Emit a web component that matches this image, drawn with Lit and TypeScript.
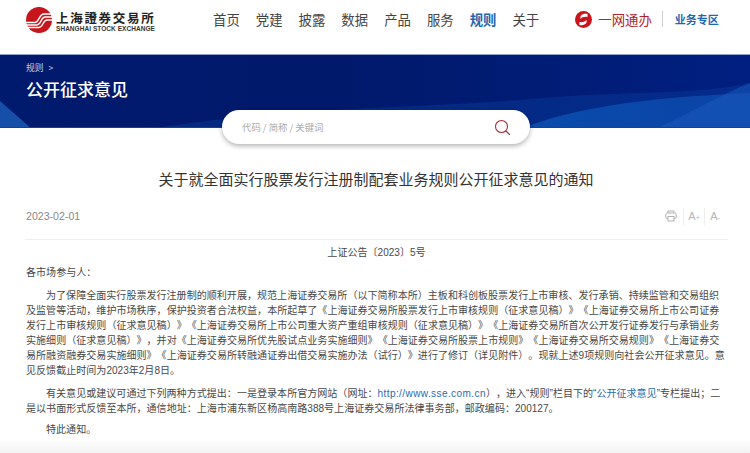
import { LitElement, html, css } from "lit";
import { customElement } from "lit/decorators.js";

const fw = (s: string) =>
  s
    .replace(/,/g, "\uFF0C")
    .replace(/\(/g, "\uFF08")
    .replace(/\)/g, "\uFF09")
    .replace(/:/g, "\uFF1A")
    .replace(/;/g, "\uFF1B");

const P1 = fw(
  "为了保障全面实行股票发行注册制的顺利开展,规范上海证券交易所(以下简称本所)主板和科创板股票发行上市审核、发行承销、持续监管和交易组织及监管等活动,维护市场秩序,保护投资者合法权益,本所起草了《上海证券交易所股票发行上市审核规则(征求意见稿)》《上海证券交易所上市公司证券发行上市审核规则(征求意见稿)》《上海证券交易所上市公司重大资产重组审核规则(征求意见稿)》《上海证券交易所首次公开发行证券发行与承销业务实施细则(征求意见稿)》,并对《上海证券交易所优先股试点业务实施细则》《上海证券交易所股票上市规则》《上海证券交易所交易规则》《上海证券交易所融资融券交易实施细则》《上海证券交易所转融通证券出借交易实施办法(试行)》进行了修订(详见附件)。现就上述9项规则向社会公开征求意见。意见反馈截止时间为2023年2月8日。"
);
const P2A = fw("有关意见或建议可通过下列两种方式提出:一是登录本所官方网站(网址:");
const P2B = fw("),进入\u201C规则\u201D栏目下的\u201C");
const P2C = fw(
  "\u201D专栏提出;二是以书面形式反馈至本所,通信地址:上海市浦东新区杨高南路388号上海证券交易所法律事务部,邮政编码:200127。"
);
const GREET = fw("各市场参与人:");

@customElement("app-root")
export class AppRoot extends LitElement {
  static styles = css`
    :host {
      display: block;
      width: 750px;
      height: 453px;
      overflow: hidden;
      position: relative;
      background: #fff;
      font-family: "Noto Sans CJK SC", "Liberation Sans", sans-serif;
      color: #444;
      text-spacing-trim: space-all;
    }
    .header {
      height: 54px;
      box-sizing: border-box;
      display: flex;
      align-items: flex-start;
      padding: 7px 0 0 26px;
    }
    .logo {
      display: flex;
      align-items: center;
      gap: 4px;
      width: 187px;
      flex: none;
    }
    .logo-text {
      display: flex;
      flex-direction: column;
      line-height: 1;
    }
    .logo-cn {
      font-family: "Noto Sans CJK JP", serif;
      font-size: 12.5px;
      font-weight: 700;
      letter-spacing: 1.7px;
      color: #222;
      height: 17px;
      line-height: 19px;
      white-space: nowrap;
    }
    .logo-en {
      font-family: "Liberation Sans", sans-serif;
      font-size: 6.5px;
      font-weight: 700;
      color: #333;
      white-space: nowrap;
      line-height: 7px;
      letter-spacing: 0.05px;
    }
    .nav {
      display: flex;
      gap: 16px;
      font-size: 13.4px;
      line-height: 24px;
      color: #444;
      white-space: nowrap;
    }
    .nav .active {
      color: #1f67b0;
      font-weight: 700;
    }
    .one {
      margin-left: 36px;
      display: flex;
      align-items: center;
      gap: 6px;
      height: 24px;
      color: #b3222c;
      font-size: 13.4px;
      white-space: nowrap;
    }
    .sep {
      width: 1px;
      height: 16px;
      background: #ccc;
      margin: 4px 12px 0 10px;
    }
    .zone {
      font-size: 11px;
      line-height: 24px;
      font-weight: 700;
      color: #1f67b0;
      white-space: nowrap;
    }
    .banner {
      height: 74px;
      box-sizing: border-box;
      position: relative;
      overflow: hidden;
      border-top: 1px solid #8fa3cc;
      border-bottom: 1px solid #1d3f8f;
      background: linear-gradient(90deg, #001a6d 0%, #00196b 45%, #001f80 100%);
      padding: 7px 0 0 26px;
      color: #fff;
    }
    .waves {
      position: absolute;
      inset: 0;
      width: 750px;
      height: 74px;
    }
    .crumb {
      position: relative;
      font-size: 8.8px;
      line-height: 12px;
      color: #c6cde2;
      display: flex;
      gap: 5px;
    }
    .banner h2 {
      position: relative;
      margin: 3px 0 0;
      font-size: 17px;
      line-height: 24px;
      font-weight: 500;
      color: #fff;
    }
    .search {
      position: relative;
      width: 308px;
      height: 34px;
      box-sizing: border-box;
      margin: -18px 0 0 222px;
      border-radius: 17px;
      background: #fff;
      box-shadow: 0 2px 5px rgba(0, 0, 0, 0.3);
      display: flex;
      align-items: center;
      justify-content: space-between;
      padding: 0 19px 0 20px;
      font-size: 9.4px;
      color: #aaa;
    }
    .search svg {
      display: block;
    }
    h1 {
      margin: 24px 0 0;
      padding-left: 2px;
      text-align: center;
      font-size: 15px;
      line-height: 22px;
      font-weight: 400;
      color: #333;
    }
    .meta {
      margin: 13px 22px 0 25px;
      height: 37px;
      box-sizing: border-box;
      border-bottom: 1px solid #eee;
      display: flex;
      justify-content: space-between;
      align-items: flex-start;
      font-family: "Liberation Sans", sans-serif;
      font-size: 10.6px;
      line-height: 26px;
      color: #888;
      padding-left: 1px;
    }
    .tools {
      display: flex;
      align-items: center;
      height: 26px;
      padding-right: 3px;
    }
    .tools .div {
      width: 1px;
      height: 17px;
      background: #eee;
    }
    .tools svg {
      display: block;
      margin-right: 6px;
    }
    .tool-a {
      width: 20px;
      text-align: center;
      color: #b4b4b4;
      font-size: 11px;
      line-height: 26px;
    }
    .tool-a small {
      font-size: 7px;
      line-height: 0;
    }
    .content {
      padding: 0 23px 0 26px;
      font-family: "Liberation Sans", "Noto Sans CJK SC", sans-serif;
      font-size: 10.05px;
      line-height: 15px;
      color: #484848;
    }
    .content p {
      margin: 0;
    }
    .content .doc-no {
      text-align: center;
      margin-top: 5px;
    }
    .content .greet {
      margin-top: 5px;
    }
    .content .para {
      text-indent: 20px;
      margin-top: 8px;
    }
    .content .first {
      margin-top: 8px;
    }
    .content .last {
      margin-top: 6px;
    }
    .blue {
      color: #2a6ab0;
    }
    .url {
      letter-spacing: 0.4px;
    }
    .foot {
      position: absolute;
      left: 0;
      right: 0;
      bottom: 0;
      height: 14px;
      background: linear-gradient(#ffffff, #f3f3f3);
    }
  `;

  render() {
    const nav = ["首页", "党建", "披露", "数据", "产品", "服务", "规则", "关于"];
    return html`
      <div class="header">
        <div class="logo">
          <svg width="26" height="26" viewBox="0 0 26 26">
            <circle cx="13" cy="13" r="13" fill="#c4161c" />
            <path d="M0 15.5 H9 C13 15.5 13 7 18 7 H25" fill="none" stroke="#fff" stroke-width="1.4" />
            <path d="M0 18 H11 C15 18 15 10 19 10 H26" fill="none" stroke="#fff" stroke-width="1.4" />
            <path d="M1 20.5 H13 C17 20.5 17 13 21 13 H26" fill="none" stroke="#fff" stroke-width="1.4" />
          </svg>
          <div class="logo-text">
            <span class="logo-cn">上海證券交易所</span>
            <span class="logo-en">SHANGHAI STOCK EXCHANGE</span>
          </div>
        </div>
        <nav class="nav">
          ${nav.map((n) => html`<span class=${n === "规则" ? "active" : ""}>${n}</span>`)}
        </nav>
        <div class="one">
          <svg width="17" height="17" viewBox="0 0 17 17">
            <circle cx="8.5" cy="8.5" r="8.5" fill="#c9161d" />
            <path d="M12.5 3 C8 2 4.5 4.5 5.5 8 C6.5 6.5 9 5.5 12.5 6 Z" fill="#fff" />
            <path d="M4.5 14 C9 15 12.5 12.5 11.5 9 C10.5 10.5 8 11.5 4.5 11 Z" fill="#fff" />
          </svg>
          <span>一网通办</span>
        </div>
        <div class="sep"></div>
        <div class="zone">业务专区</div>
      </div>

      <div class="banner">
        <svg class="waves" viewBox="0 0 750 74" preserveAspectRatio="none">
          <defs>
            <linearGradient id="w" x1="0" x2="1" y1="0" y2="0">
              <stop offset="0" stop-color="#0a4fb0" stop-opacity="0.9" />
              <stop offset="1" stop-color="#0b46a8" stop-opacity="0.9" />
            </linearGradient>
          </defs>
          <path d="M0 46 L32 74 H0 Z" fill="#1a5cb8" opacity="0.8" />
          <path d="M150 74 C300 50 420 54 530 44 C620 36 700 40 750 28 V74 Z" fill="url(#w)" opacity="0.35" />
          <path d="M520 74 C580 50 660 42 750 38 V74 Z" fill="url(#w)" />
          <path d="M655 74 C690 58 720 40 750 28 V74 Z" fill="#1a5cc0" opacity="0.5" />
        </svg>
        <div class="crumb"><span>规则</span><span>&gt;</span></div>
        <h2>公开征求意见</h2>
      </div>

      <div class="search">
        <span>代码 / 简称 / 关键词</span>
        <svg width="17" height="17" viewBox="0 0 17 17" fill="none" stroke="#a8343a" stroke-width="1.1">
          <circle cx="7.5" cy="7.5" r="6" />
          <path d="M12 12 L15.5 15.5" stroke-linecap="round" />
        </svg>
      </div>

      <h1>关于就全面实行股票发行注册制配套业务规则公开征求意见的通知</h1>

      <div class="meta">
        <span>2023-02-01</span>
        <div class="tools">
          <svg width="12" height="12" viewBox="0 0 12 12" fill="none" stroke="#aaa" stroke-width="0.9">
            <path d="M3 3 V1 H9 V3" />
            <rect x="0.8" y="3" width="10.4" height="5.5" rx="1.5" />
            <rect x="3" y="6.5" width="6" height="4.5" fill="#fff" />
          </svg>
          <span class="div"></span>
          <span class="tool-a">A<small>+</small></span>
          <span class="div"></span>
          <span class="tool-a">A<small>-</small></span>
        </div>
      </div>

      <div class="content">
        <p class="doc-no">上证公告〔2023〕5号</p>
        <p class="greet">${GREET}</p>
        <p class="para first">${P1}</p>
        <p class="para">${P2A}<span class="blue url">http://www.sse.com.cn</span>${P2B}<span class="blue">公开征求意见</span>${P2C}</p>
        <p class="para last">特此通知。</p>
      </div>
      <div class="foot"></div>
    `;
  }
}
